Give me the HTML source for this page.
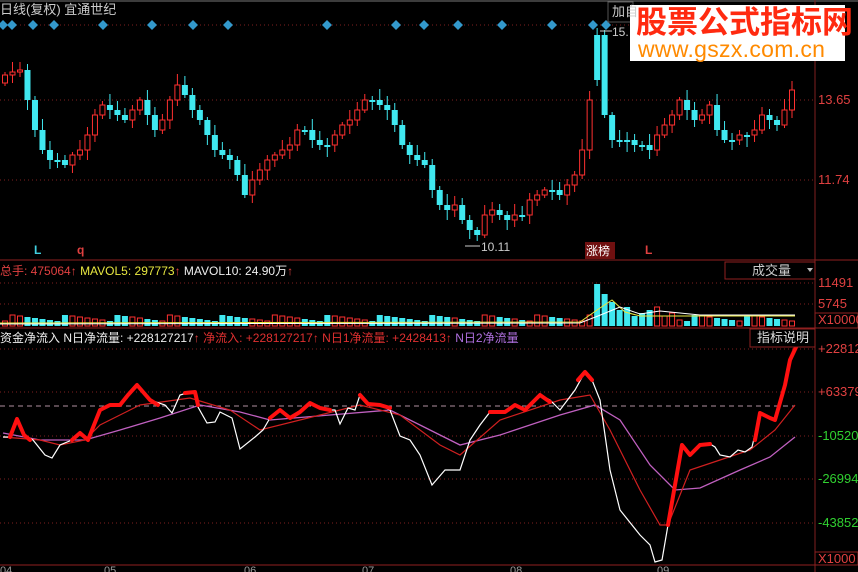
<!DOCTYPE html>
<html><head><meta charset="utf-8"><style>
html,body{margin:0;padding:0;background:#000;overflow:hidden}
body{width:858px;height:572px;position:relative;font-family:"Liberation Sans","Noto Sans CJK SC",sans-serif}
.t{position:absolute;font-size:12px;white-space:nowrap;line-height:14px}
</style></head><body>
<svg id="s" width="858" height="572" style="position:absolute;left:0;top:0" xmlns="http://www.w3.org/2000/svg">
<line x1="0" y1="1" x2="858" y2="1" stroke="#777"/>
<line x1="815" y1="0" x2="815" y2="572" stroke="#802020"/>
<line x1="0" y1="260" x2="858" y2="260" stroke="#902020"/>
<line x1="0" y1="328" x2="858" y2="328" stroke="#902020"/>
<line x1="0" y1="565" x2="815" y2="565" stroke="#902020"/>
<g stroke="#802020" stroke-dasharray="1,3">
<line x1="0" y1="25" x2="815" y2="25"/><line x1="0" y1="100" x2="815" y2="100"/><line x1="0" y1="180" x2="815" y2="180"/>
<line x1="0" y1="283" x2="815" y2="283"/><line x1="0" y1="304" x2="815" y2="304"/>
<line x1="0" y1="349" x2="815" y2="349"/><line x1="0" y1="392" x2="815" y2="392"/><line x1="0" y1="436" x2="815" y2="436"/><line x1="0" y1="479" x2="815" y2="479"/><line x1="0" y1="523" x2="815" y2="523"/>
</g>
<g id="c"></g>
<g id="v"></g>
<line x1="0" y1="406" x2="795" y2="406" stroke="#b090a0" stroke-dasharray="5,4"/>
<polyline fill="none" stroke="#c060c0" stroke-width="1.3" points="3,433 40,440 85,440 120,430 160,418 200,405 240,412 270,420 330,415 390,410 420,425 460,445 500,435 560,415 595,405 620,420 650,465 675,490 700,488 740,470 770,457 795,437"/>
<polyline fill="none" stroke="#d02020" stroke-width="1.2" points="3,437 40,440 60,445 85,440 100,425 140,405 190,398 230,410 260,430 300,420 360,405 400,415 440,445 460,455 500,420 560,400 590,395 610,430 640,490 660,525 668,525 690,470 720,460 750,450 775,430 795,405"/>
<polyline fill="none" stroke="#fff" stroke-width="1.2" points="3,437 10,437 17,419 24,435 33,440 45,455 52,458 60,445 72,440 80,433 88,440 100,410 110,405 120,405 128,395 137,385 150,400 165,405 172,413 180,395 187,393 195,392 198,407 207,423 215,422 220,412 232,418 240,449 255,437 263,430 270,418 280,410 290,418 300,412 310,403 320,408 330,410 335,410 340,424 348,408 355,410 360,395 368,404 380,405 390,410 400,436 410,440 420,455 432,485 445,470 460,470 470,440 480,425 490,412 505,412 515,405 525,410 540,395 550,400 560,410 575,390 585,372 592,380 600,400 610,470 620,510 640,535 650,545 655,562 662,560 668,525 682,445 690,455 700,445 710,444 715,447 720,455 730,457 738,450 745,452 752,447 760,413 770,418 775,420 785,385 790,360 797,345"/>
<g fill="none" stroke="#ff1010" stroke-width="4" stroke-linejoin="round" stroke-linecap="round">
<polyline points="10,437 17,419 24,435 30,440"/>
<polyline points="72,440 80,433 88,440 100,410 110,405 120,405 128,395 137,385 150,400 158,405"/>
<polyline points="185,393 195,392 198,405"/>
<polyline points="270,418 280,410 290,418 300,412 310,403 320,408 330,410"/>
<polyline points="360,395 368,404 380,405 390,408"/>
<polyline points="490,412 505,412 515,405 525,410 540,395 550,402"/>
<polyline points="578,380 585,372 592,380"/>
<polyline points="668,525 682,445 690,455 700,445 710,444"/>
<polyline points="755,440 760,413 770,418 775,420 785,385 790,360 797,345"/>
</g>
<g fill="#3399cc" id="d"></g>
<rect x="585" y="242" width="30" height="17" fill="#701010"/>
<line x1="465" y1="246" x2="480" y2="246" stroke="#ccc"/>
<line x1="600" y1="31" x2="612" y2="31" stroke="#ccc"/>
<rect x="608" y="2" width="25" height="20" fill="none" stroke="#555"/>
<rect x="630" y="5" width="215" height="56" fill="#fff"/>
<rect x="725" y="262" width="90" height="17" fill="#000" stroke="#902020"/>
<path d="M807,268 l6,0 l-3,4z" fill="#bbb"/>
<rect x="750" y="329" width="65" height="18" fill="#000" stroke="#902020"/>
<rect x="815" y="313" width="43" height="15" fill="none" stroke="#902020"/>
<rect x="815" y="552" width="43" height="13" fill="none" stroke="#902020"/>
</svg>
<div class="t" style="left:0;top:3px;color:#ccc;font-size:13px">日线(复权) 宜通世纪</div>
<div class="t" style="left:612px;top:5px;color:#ccc;font-size:13px">加自</div>
<div class="t" style="left:612px;top:25px;color:#ccc;font-size:12px">15.</div>
<div class="t" style="left:636px;top:6px;color:#ff2a10;font-size:31px;font-weight:bold;line-height:34px">股票公式指标网</div>
<div class="t" style="left:638px;top:37px;color:#ff8a00;font-size:23px;line-height:24px;letter-spacing:0.3px">www.gszx.com.cn</div>
<div class="t" style="left:818px;top:93px;color:#e04040;font-size:13px">13.65</div>
<div class="t" style="left:818px;top:173px;color:#e04040;font-size:13px">11.74</div>
<div class="t" style="left:34px;top:243px;color:#40d0e0;font-weight:bold">L</div>
<div class="t" style="left:77px;top:243px;color:#e04040;font-weight:bold">q</div>
<div class="t" style="left:481px;top:240px;color:#ccc">10.11</div>
<div class="t" style="left:586px;top:244px;color:#fff">涨榜</div>
<div class="t" style="left:645px;top:243px;color:#e04040;font-weight:bold">L</div>
<div class="t" style="left:0;top:264px;color:#e04040">总手: 475064<b>↑</b> <span style="color:#e8e840">MAVOL5: 297773<b style="color:#e04040">↑</b></span> <span style="color:#eee">MAVOL10: 24.90万<b style="color:#e04040">↑</b></span></div>
<div class="t" style="left:752px;top:264px;color:#ccc;font-size:13px">成交量</div>
<div class="t" style="left:818px;top:276px;color:#e04040;font-size:13px">11491</div>
<div class="t" style="left:818px;top:297px;color:#e04040;font-size:13px">5745</div>
<div class="t" style="left:818px;top:313px;color:#e04040;font-size:13px">X10000</div>
<div class="t" style="left:0;top:331px;color:#eee">资金净流入 N日净流量: +228127217<b style="color:#e04040">↑</b> <span style="color:#e03030">净流入: +228127217<b>↑</b> N日1净流量: +2428413<b>↑</b></span> <span style="color:#b070e0">N日2净流量</span></div>
<div class="t" style="left:757px;top:331px;color:#ddd;font-size:13px">指标说明</div>
<div class="t" style="left:818px;top:342px;color:#e04040;font-size:13px">+22812</div>
<div class="t" style="left:818px;top:385px;color:#e04040;font-size:13px">+63379</div>
<div class="t" style="left:818px;top:429px;color:#30d030;font-size:13px">-10520</div>
<div class="t" style="left:818px;top:472px;color:#30d030;font-size:13px">-26994</div>
<div class="t" style="left:818px;top:516px;color:#30d030;font-size:13px">-43852</div>
<div class="t" style="left:818px;top:552px;color:#e04040;font-size:13px">X1000</div>
<div class="t" style="left:0;top:564px;color:#999;font-size:11px">04</div>
<div class="t" style="left:104px;top:564px;color:#999;font-size:11px">05</div>
<div class="t" style="left:244px;top:564px;color:#999;font-size:11px">06</div>
<div class="t" style="left:362px;top:564px;color:#999;font-size:11px">07</div>
<div class="t" style="left:510px;top:564px;color:#999;font-size:11px">08</div>
<div class="t" style="left:657px;top:564px;color:#999;font-size:11px">09</div>
<script>
(function(){
var ys=[75,72,70,100,130,150,160,160,165,155,150,135,115,105,110,115,120,110,100,115,130,120,100,85,95,110,120,135,150,155,160,175,195,180,170,160,155,150,145,130,130,140,145,145,135,125,120,110,100,100,105,110,125,145,155,160,165,190,205,210,205,220,230,235,215,210,215,220,215,215,200,195,190,190,195,185,175,150,100,35,115,140,140,140,145,145,150,135,125,115,100,110,120,115,105,130,140,140,135,135,130,115,120,125,110,90];
var N=ys.length,st=787/(N-1),c='',v='';
for(var i=0;i<N;i++){var x=5+i*st,p=i?ys[i-1]:ys[0]+8,y=ys[i],up=y<p,tp=Math.min(p,y),b=Math.max(Math.abs(p-y),2);
if(i==79){tp=35;b=45;up=false}
var col=up?'#ff3030':'#40e8f0',hi=tp-3-(i*7%9),lo=tp+b+3+(i*5%8);
c+='<line x1="'+x+'" y1="'+hi+'" x2="'+x+'" y2="'+lo+'" stroke="'+col+'"/>';
c+=up?'<rect x="'+(x-2.5)+'" y="'+tp+'" width="5" height="'+b+'" fill="#000" stroke="'+col+'"/>':'<rect x="'+(x-3)+'" y="'+tp+'" width="6" height="'+b+'" fill="'+col+'"/>';
var h=5+(i*13%7);if(i==79)h=42;if(i==80)h=32;if(i==81)h=24;if(i>81&&i<90)h=10+(i%4)*3;
v+=up?'<rect x="'+(x-2.5)+'" y="'+(326-h)+'" width="5" height="'+h+'" fill="none" stroke="'+col+'"/>':'<rect x="'+(x-3)+'" y="'+(326-h)+'" width="6" height="'+h+'" fill="'+col+'"/>';}
v+='<polyline fill="none" stroke="#e8e840" points="0,323 580,322 597,310 612,300 625,312 640,316 700,316 795,316"/><polyline fill="none" stroke="#fff" points="0,324 580,323 598,316 620,307 640,314 660,311 700,315 795,315"/>';
document.getElementById('c').innerHTML=c;document.getElementById('v').innerHTML=v;
var d='',dx=[3,12,33,54,103,152,193,228,327,396,424,458,502,552,593,606];
dx.forEach(function(x){d+='<path d="M'+x+',20 l5,5 l-5,5 l-5,-5z"/>'});
document.getElementById('d').innerHTML=d;
})();
</script>
</body></html>
